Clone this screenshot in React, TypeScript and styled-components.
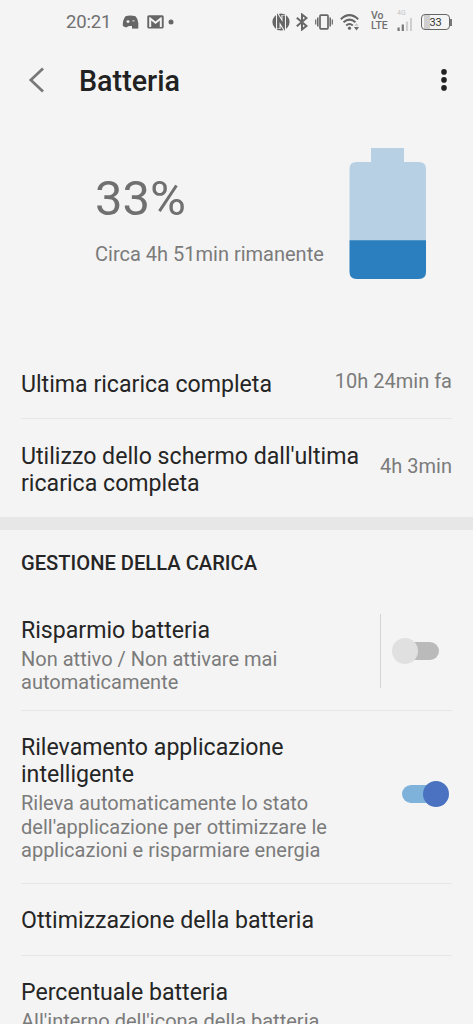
import React from "react";
import styled, { createGlobalStyle } from "styled-components";

const GlobalStyle = createGlobalStyle`
  * { box-sizing: border-box; }
  html, body { margin: 0; padding: 0; background: #f4f4f4; }
  body { font-family: Roboto, "Liberation Sans", sans-serif; color: #252525; }
`;

const Screen = styled.div`
  width: 473px;
  height: 1024px;
  overflow: hidden;
  background: #f4f4f4;
`;

const StatusBar = styled.header`
  display: flex;
  align-items: center;
  justify-content: space-between;
  height: 44px;
  padding: 0 21px 0 66px;
  color: #666;
`;

const StatusGroup = styled.div`
  display: flex;
  align-items: center;
`;

const Clock = styled.span`
  width: 56px;
  font-size: 18.5px;
  line-height: 22px;
  letter-spacing: -0.15px;
  white-space: nowrap;
  color: #707070;
`;

const Glyph = styled.svg<{ $gap?: number }>`
  display: block;
  flex: none;
  margin-left: ${(p) => p.$gap ?? 0}px;
`;

const VoLte = styled.div`
  width: 18px;
  margin: -2px 0 0 11px;
  font-size: 10.5px;
  font-weight: 500;
  line-height: 10px;
  color: #707070;
`;

const Signal = styled.div`
  display: flex;
  flex-direction: column;
  justify-content: space-between;
  margin: -3px 0 0 8px;
  width: 16px;
  height: 21px;
`;

const Network = styled.span`
  font-size: 7px;
  line-height: 7px;
  color: #c4c4c4;
`;

const BatteryBadge = styled.div`
  display: flex;
  align-items: center;
  margin-left: 8px;
`;

const BadgeBody = styled.div`
  display: flex;
  align-items: center;
  justify-content: center;
  width: 29px;
  height: 16px;
  border: 1.5px solid #666;
  border-radius: 4px;
  font-size: 11px;
  line-height: 13px;
  letter-spacing: -0.2px;
  color: #333;
  background: linear-gradient(to right, transparent 1.5px, #cfcfcf 1.5px, #cfcfcf 8px, transparent 8px);
`;

const BadgeTip = styled.div`
  width: 2px;
  height: 7px;
  background: #777;
`;

const AppBar = styled.div`
  display: flex;
  align-items: center;
  height: 74px;
  padding: 0 25px 0 28px;
`;

const AppTitle = styled.h1`
  flex: 1;
  margin: 0 0 0 34px;
  font-size: 28.7px;
  font-weight: 500;
  line-height: 34px;
  color: #212121;
`;

const Summary = styled.section`
  display: flex;
  justify-content: space-between;
  height: 228px;
  padding: 30px 47px 0 95px;
`;

const SummaryText = styled.div`
  padding-top: 22px;
  white-space: nowrap;
`;

const Percent = styled.div`
  font-size: 49px;
  line-height: 58px;
  color: #707070;
`;

const Remaining = styled.div`
  margin-top: 14px;
  font-size: 20px;
  line-height: 24px;
  color: #7b7b7b;
`;

const Row = styled.div<{ $height: number; $top: number; $last?: boolean }>`
  display: flex;
  justify-content: space-between;
  height: ${(p) => p.$height}px;
  margin: 0 21px;
  padding-top: ${(p) => p.$top}px;
  border-bottom: ${(p) => (p.$last ? "none" : "1px solid #e6e6e6")};
`;

const RowText = styled.div<{ $offset?: number }>`
  padding-top: ${(p) => p.$offset ?? 0}px;
`;

const RowTitle = styled.div`
  font-size: 23.13px;
  line-height: 27px;
  white-space: pre-line;
`;

const RowDetail = styled.div`
  margin-top: 4px;
  font-size: 20px;
  line-height: 23.7px;
  letter-spacing: 0.01px;
  white-space: pre-line;
  color: #7b7b7b;
`;

const RowValue = styled.div<{ $top?: number }>`
  margin-top: ${(p) => p.$top ?? 0}px;
  font-size: 20px;
  line-height: 24px;
  white-space: nowrap;
  color: #7b7b7b;
`;

const SectionBand = styled.div`
  height: 13px;
  background: #e7e7e7;
`;

const SectionTitle = styled.h2`
  height: 61px;
  margin: 0;
  padding: 21px 21px 0;
  font-size: 20.15px;
  font-weight: 500;
  line-height: 24px;
`;

const SwitchArea = styled.div<{ $divided?: boolean }>`
  display: flex;
  align-items: center;
  align-self: flex-start;
  height: ${(p) => (p.$divided ? 74 : 120)}px;
  padding: 0 ${(p) => (p.$divided ? 13 : 3)}px 0 11px;
  border-left: ${(p) => (p.$divided ? "1px solid #d4d4d4" : "none")};
`;

const Toggle = styled.div<{ $on?: boolean }>`
  display: flex;
  align-items: center;
  justify-content: ${(p) => (p.$on ? "flex-end" : "flex-start")};
  width: 37px;
  height: 18px;
  margin: ${(p) => (p.$on ? "0 10px 0 0" : "0 0 0 10px")};
  border-radius: 9px;
  background: ${(p) => (p.$on ? "#7fb2db" : "#bababa")};
`;

const Knob = styled.div<{ $on?: boolean }>`
  flex: none;
  width: 26px;
  height: 26px;
  margin: ${(p) => (p.$on ? "0 -10px 0 0" : "0 0 0 -10px")};
  border-radius: 50%;
  background: ${(p) => (p.$on ? "#4a72c0" : "#e0e0e0")};
`;

const Switch = ({ on }: { on?: boolean }) => (
  <Toggle $on={on}>
    <Knob $on={on} />
  </Toggle>
);

export default function App() {
  return (
    <Screen>
      <GlobalStyle />
      <StatusBar>
        <StatusGroup>
          <Clock>20:21</Clock>
          <Glyph width="18" height="16" viewBox="0 0 18 16">
            <path d="M3.5 2.2Q8 .8 13.5 2.2Q16.3 5 16.3 9H10.5V12H7L4 13.5L.8 12Q.5 6 3.5 2.2Z" fill="#666" />
            <ellipse cx="6" cy="7.6" rx="1.5" ry="1.3" fill="#f4f4f4" />
            <ellipse cx="11.5" cy="6.8" rx="1.5" ry=".9" fill="#b0b0b0" />
            <rect x="10" y="9" width="6.3" height="5.6" fill="#666" />
          </Glyph>
          <Glyph $gap={7} width="17" height="14" viewBox="0 0 17 14">
            <rect x=".3" y=".3" width="16.4" height="13.2" rx="1.5" fill="#666" />
            <path d="M14.8 12H12.8V5.4L8.5 8.9L4.2 5.4V12H2.2V2.2H3.2L8.5 6.4L13.8 2.2H14.8Z" fill="#f4f4f4" />
          </Glyph>
          <Glyph $gap={4} width="6" height="6" viewBox="0 0 6 6">
            <circle cx="3" cy="3" r="2.5" fill="#666" />
          </Glyph>
        </StatusGroup>
        <StatusGroup>
          <Glyph width="18" height="18" viewBox="0 0 18 18">
            <circle cx="9" cy="9" r="8.6" fill="#666" />
            <path d="M6.3 16V4.5L11.7 13.5V2" fill="none" stroke="#f4f4f4" strokeWidth="4.6" />
            <path d="M6.3 15.5V4.5L11.7 13.5V2.5" fill="none" stroke="#666" strokeWidth="2.5" />
          </Glyph>
          <Glyph $gap={6} width="12" height="18" viewBox="0 0 12 18" fill="none" stroke="#666" strokeWidth="2">
            <path d="M.8 4.7L10.5 13L6 16.5V1.5L10.5 5L.8 13.3" />
          </Glyph>
          <Glyph $gap={7} width="18" height="16" viewBox="0 0 18 16" fill="none" stroke="#666">
            <rect x="5" y="1.2" width="8" height="13.6" rx=".8" strokeWidth="1.7" />
            <path d="M2.8 3.5V12.5M15.2 3.5V12.5" strokeWidth="1.5" />
            <path d="M.7 5.5V10.5M17.3 5.5V10.5" strokeWidth="1.2" />
          </Glyph>
          <Glyph $gap={7} width="20" height="18" viewBox="0 0 20 18" fill="none" stroke="#666" strokeWidth="2">
            <path d="M.8 6.2Q9.5-2 18.2 6.2" />
            <path d="M3.5 9.3Q9.5 4 15.5 9.3" />
            <path d="M6.2 12.4Q9.5 9.6 12.8 12.4" />
            <circle cx="9.5" cy="15.2" r="1.6" fill="#666" stroke="none" />
            <path d="M14.2 13L16.5 10L18.8 13Z" fill="#ccc" stroke="none" />
            <path d="M14 14L16.5 17.5L19 14Z" fill="#666" stroke="none" />
          </Glyph>
          <VoLte>
            Vo
            <br />
            LTE
          </VoLte>
          <Signal>
            <Network>4G</Network>
            <Glyph width="16" height="13" viewBox="0 0 16 13">
              <path d="M.5 9.5H2.7V13H.5ZM4.7 6.5H6.9V13H4.7Z" fill="#777" />
              <path d="M8.9 3.5H11.1V13H8.9ZM13 0H15V13H13Z" fill="#cfcfcf" />
            </Glyph>
          </Signal>
          <BatteryBadge>
            <BadgeBody>33</BadgeBody>
            <BadgeTip />
          </BatteryBadge>
        </StatusGroup>
      </StatusBar>

      <AppBar>
        <Glyph width="17" height="28" viewBox="0 0 17 28">
          <path d="M15 1.5L2.8 13L15 24.5" fill="none" stroke="#777" strokeWidth="2.7" />
        </Glyph>
        <AppTitle>Batteria</AppTitle>
        <Glyph width="8" height="24" viewBox="0 0 8 24" fill="#212121">
          <circle cx="4" cy="2.9" r="2.8" />
          <circle cx="4" cy="10.9" r="2.8" />
          <circle cx="4" cy="18.9" r="2.8" />
        </Glyph>
      </AppBar>

      <Summary>
        <SummaryText>
          <Percent>33%</Percent>
          <Remaining>Circa 4h 51min rimanente</Remaining>
        </SummaryText>
        <Glyph width="77" height="131" viewBox="0 0 77 131">
          <path d="M22 0H55V14H70Q77 14 77 21V93H.5V21Q.5 14 7.5 14H22Z" fill="#b8d0e4" />
          <path d="M.5 92.3H77V124Q77 131 70 131H7.5Q.5 131 .5 124Z" fill="#2b7fbf" />
        </Glyph>
      </Summary>

      <Row $height={73} $top={25}>
        <RowTitle>Ultima ricarica completa</RowTitle>
        <RowValue $top={-2}>10h 24min fa</RowValue>
      </Row>
      <Row $height={98} $top={24} $last>
        <RowTitle>{"Utilizzo dello schermo dall'ultima\nricarica completa"}</RowTitle>
        <RowValue $top={11}>4h 3min</RowValue>
      </Row>

      <SectionBand />
      <SectionTitle>GESTIONE DELLA CARICA</SectionTitle>

      <Row $height={120} $top={23}>
        <RowText $offset={2.6}>
          <RowTitle>Risparmio batteria</RowTitle>
          <RowDetail>{"Non attivo / Non attivare mai\nautomaticamente"}</RowDetail>
        </RowText>
        <SwitchArea $divided>
          <Switch />
        </SwitchArea>
      </Row>
      <Row $height={173} $top={23}>
        <RowText>
          <RowTitle>{"Rilevamento applicazione\nintelligente"}</RowTitle>
          <RowDetail>
            {"Rileva automaticamente lo stato\ndell'applicazione per ottimizzare le\napplicazioni e risparmiare energia"}
          </RowDetail>
        </RowText>
        <SwitchArea>
          <Switch on />
        </SwitchArea>
      </Row>
      <Row $height={72} $top={23}>
        <RowTitle>Ottimizzazione della batteria</RowTitle>
      </Row>
      <Row $height={90} $top={23} $last>
        <RowText>
          <RowTitle>Percentuale batteria</RowTitle>
          <RowDetail>All'interno dell'icona della batteria</RowDetail>
        </RowText>
      </Row>
    </Screen>
  );
}
